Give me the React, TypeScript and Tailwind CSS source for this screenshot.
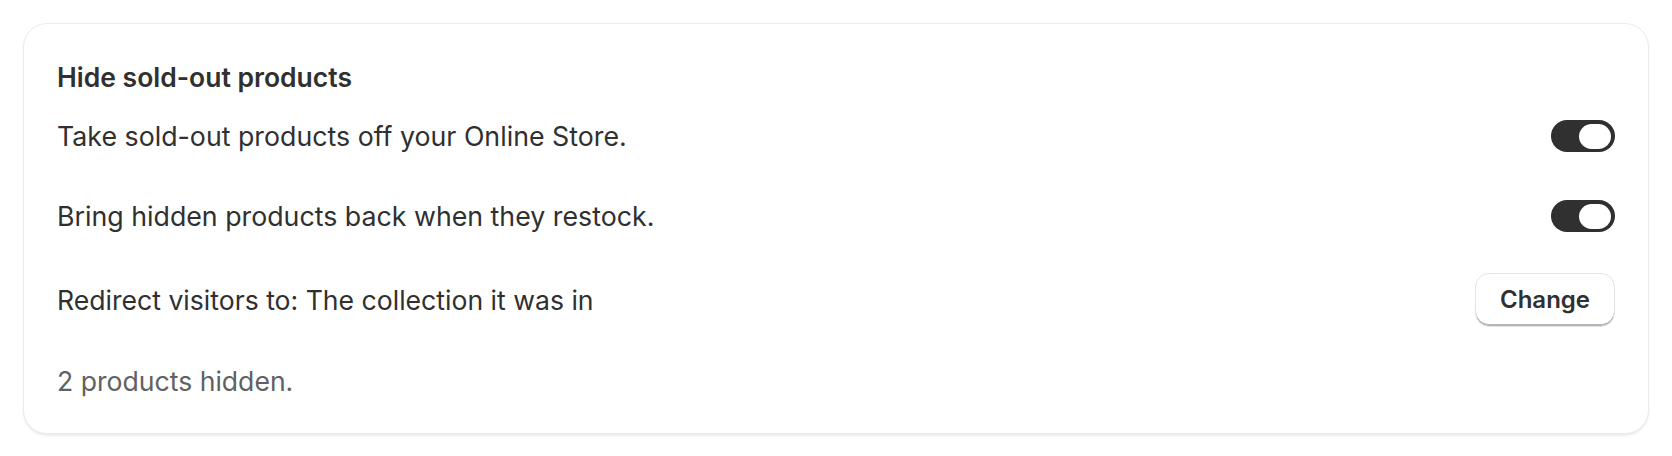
import React, { useState } from 'react'

const Toggle = ({ on, onChange }: { on: boolean; onChange: () => void }) => (
  <button
    type="button"
    onClick={onChange}
    className={`relative flex h-[32px] w-[64px] shrink-0 items-center rounded-full px-[4px] ${
      on ? 'justify-end bg-[#303030]' : 'justify-start bg-[#cccccc]'
    }`}
  >
    <span className="block h-[25px] w-[32px] rounded-full bg-white" />
  </button>
)

const App = () => {
  const [hideSoldOut, setHideSoldOut] = useState(true)
  const [restock, setRestock] = useState(true)

  return (
    <div className="min-h-screen bg-white p-[23px] font-['Inter',sans-serif] text-[#303030]">
      <div className="rounded-[24px] border border-[#ebebeb] bg-white px-[33px] pb-[36px] pt-[37px] shadow-[0_2px_2px_rgba(0,0,0,0.07)]">
        <h2 className="text-[26.5px] font-semibold leading-[32px]">
          Hide sold-out products
        </h2>

        <div className="mt-[27px] flex items-center justify-between">
          <span className="text-[26.75px] leading-[32px]">Take sold-out products off your Online Store.</span>
          <Toggle on={hideSoldOut} onChange={() => setHideSoldOut(!hideSoldOut)} />
        </div>

        <div className="mt-[48px] flex items-center justify-between">
          <span className="text-[26.75px] leading-[32px]">Bring hidden products back when they restock.</span>
          <Toggle on={restock} onChange={() => setRestock(!restock)} />
        </div>

        <div className="mt-[41px] flex items-center justify-between">
          <span className="text-[26.6px] leading-[32px]">Redirect visitors to: The collection it was in</span>
          <button
            type="button"
            className="h-[54px] w-[140px] rounded-[14px] border border-[#e3e3e3] bg-white text-[24px] font-semibold text-[#303030] shadow-[inset_0_-2px_0_#b5b5b5]"
          >
            Change
          </button>
        </div>

        <p className="mt-[38px] text-[26.6px] leading-[32px] text-[#616161]">2 products hidden.</p>
      </div>
    </div>
  )
}

export default App
